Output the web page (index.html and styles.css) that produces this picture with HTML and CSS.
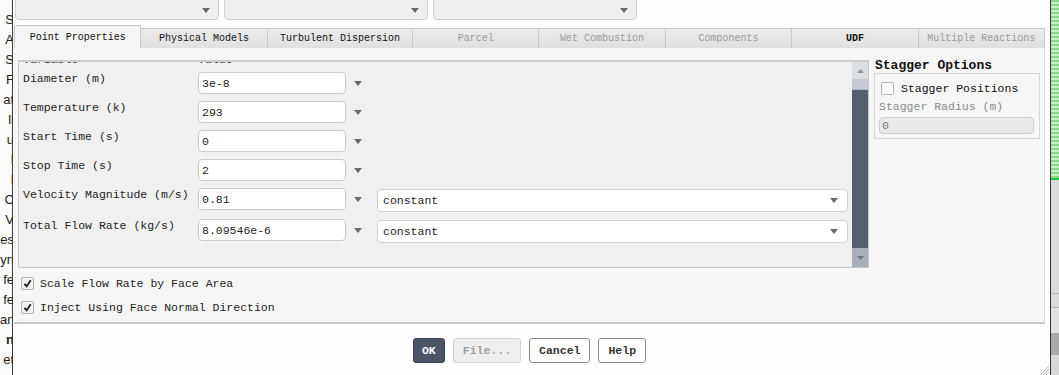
FILE: index.html
```html
<!DOCTYPE html>
<html lang="en">
<head>
  <meta charset="UTF-8">
  <title>Set Injection Properties</title>
  <meta name="viewport" content="width=device-width, initial-scale=1.0">
  <link rel="stylesheet" href="styles.css">
</head>
<body>
  <div class="screen">

    <!-- tree of the main window, mostly hidden behind the dialog -->
    <div class="behind-left">
      <div>S</div><div>A</div><div>S</div><div>F</div><div>at</div><div>ll</div>
      <div>u</div><div>I</div><div>I</div><div>C</div><div>V</div><div>es</div>
      <div>yn</div><div>fe</div><div>fe</div><div>an</div><div class="bold">n</div><div>et</div>
    </div>

    <div class="dialog">
      <div class="combos">
        <div class="combo top"><span></span><svg class="arrow" viewBox="0 0 8 5"><path d="M0 0H8L4 5Z"/></svg></div>
        <div class="combo top"><span></span><svg class="arrow" viewBox="0 0 8 5"><path d="M0 0H8L4 5Z"/></svg></div>
        <div class="combo top"><span></span><svg class="arrow" viewBox="0 0 8 5"><path d="M0 0H8L4 5Z"/></svg></div>
      </div>

      <div class="tabs">
        <div class="tab active">Point Properties</div>
        <div class="tab">Physical Models</div>
        <div class="tab wide">Turbulent Dispersion</div>
        <div class="tab disabled">Parcel</div>
        <div class="tab disabled">Wet Combustion</div>
        <div class="tab disabled">Components</div>
        <div class="tab strong">UDF</div>
        <div class="tab disabled">Multiple Reactions</div>
      </div>

      <div class="panel">
        <div class="main">
          <div class="scroll">
            <div class="rows">
              <div class="head"><span class="label">Variable</span><span>Value</span></div>

              <div class="row">
                <span class="label">Diameter (m)</span>
                <div class="input">3e-8</div>
                <div class="drop"><svg class="arrow" viewBox="0 0 8 5"><path d="M0 0H8L4 5Z"/></svg></div>
              </div>
              <div class="row">
                <span class="label">Temperature (k)</span>
                <div class="input">293</div>
                <div class="drop"><svg class="arrow" viewBox="0 0 8 5"><path d="M0 0H8L4 5Z"/></svg></div>
              </div>
              <div class="row">
                <span class="label">Start Time (s)</span>
                <div class="input">0</div>
                <div class="drop"><svg class="arrow" viewBox="0 0 8 5"><path d="M0 0H8L4 5Z"/></svg></div>
              </div>
              <div class="row">
                <span class="label">Stop Time (s)</span>
                <div class="input">2</div>
                <div class="drop"><svg class="arrow" viewBox="0 0 8 5"><path d="M0 0H8L4 5Z"/></svg></div>
              </div>
              <div class="row">
                <span class="label">Velocity Magnitude (m/s)</span>
                <div class="input">0.81</div>
                <div class="drop"><svg class="arrow" viewBox="0 0 8 5"><path d="M0 0H8L4 5Z"/></svg></div>
                <div class="combo profile"><span>constant</span><svg class="arrow" viewBox="0 0 8 5"><path d="M0 0H8L4 5Z"/></svg></div>
              </div>
              <div class="row">
                <span class="label">Total Flow Rate (kg/s)</span>
                <div class="input">8.09546e-6</div>
                <div class="drop"><svg class="arrow" viewBox="0 0 8 5"><path d="M0 0H8L4 5Z"/></svg></div>
                <div class="combo profile"><span>constant</span><svg class="arrow" viewBox="0 0 8 5"><path d="M0 0H8L4 5Z"/></svg></div>
              </div>
            </div>

            <div class="scrollbar">
              <div class="sb-up"><svg viewBox="0 0 7 4"><path d="M0 4H7L3.5 0Z"/></svg></div>
              <div class="sb-track"></div>
              <div class="sb-thumb"></div>
              <div class="sb-down"><svg viewBox="0 0 7 4"><path d="M0 0H7L3.5 4Z"/></svg></div>
            </div>
          </div>

          <div class="checks">
            <div class="check">
              <span class="box on"><svg viewBox="0 0 12 12"><path d="M2.5 6.5L5 9L9.5 2.5"/></svg></span>
              Scale Flow Rate by Face Area
            </div>
            <div class="check">
              <span class="box on"><svg viewBox="0 0 12 12"><path d="M2.5 6.5L5 9L9.5 2.5"/></svg></span>
              Inject Using Face Normal Direction
            </div>
          </div>
        </div>

        <div class="side">
          <div class="side-title">Stagger Options</div>
          <div class="group">
            <div class="check dark"><span class="box white"></span>Stagger Positions</div>
            <div class="muted">Stagger Radius (m)</div>
            <div class="input disabled">0</div>
          </div>
        </div>
      </div>

      <div class="buttons">
        <button class="btn default">OK</button>
        <button class="btn off">File...</button>
        <button class="btn">Cancel</button>
        <button class="btn">Help</button>
      </div>

      <svg class="grip" viewBox="0 0 10 10"><path d="M10 1L1 10M10 4L4 10M10 7L7 10"/></svg>
    </div>

    <div class="behind-right">
      <div class="stripes"></div>
      <div class="grey"></div>
    </div>
  </div>
</body>
</html>
```

FILE: styles.css
```css
:root {
  --line: #c8c8c8;
  --panel: #f6f6f6;
  --field: #fff;
  --text: #1e1e1e;
  --muted: #8c8c8c;
  --arrow: #6b6b6b;
  --mono: "Liberation Mono", "DejaVu Sans Mono", monospace;
}

* {
  margin: 0;
  padding: 0;
  box-sizing: border-box;
}

body {
  background: #fff;
  overflow: hidden;
}

.screen {
  display: flex;
  width: 1059px;
  height: 375px;
  overflow: hidden;
}

/* window behind the dialog */
.behind-left {
  width: 13px;
  flex: none;
  padding-top: 10px;
  background: #fbfbfb;
  border-right: 1px solid #3a3a3a;
  overflow: hidden;
  font-family: "Liberation Sans", Arial, sans-serif;
  font-size: 13px;
  color: #222;
}

.behind-left div {
  height: 20px;
  line-height: 20px;
  text-align: right;
  margin-right: -2px;
}

.behind-left .bold {
  font-weight: bold;
}

.behind-right {
  width: 10px;
  flex: none;
  border-left: 1px solid #333;
  display: flex;
  flex-direction: column;
}

.stripes {
  height: 180px;
  background: repeating-linear-gradient(#86d986 0 2px, #c9efc9 2px 4px);
  border-bottom: 2px solid #27c93a;
}

.grey {
  flex: 1;
  background: linear-gradient(#dadada 0 113px, #b5b5b5 113px 114px, #dadada 114px 127px, #b5b5b5 127px 128px, #e2e2e2 128px 153px, #a9a9a9 153px 175px, #d8d8d8 175px);
}

/* dialog */
.dialog {
  position: relative;
  flex: 1;
  padding: 0 5px 0 1px;
  background: #fefefe;
  font-family: var(--mono);
  font-size: 11.5px;
  color: var(--text);
  display: flex;
  flex-direction: column;
}

.combos {
  height: 26px;
  display: flex;
  gap: 5px;
  padding-left: 1px;
}

.combo {
  display: flex;
  align-items: center;
  justify-content: space-between;
  border: 1px solid #cfcfcf;
  border-radius: 4px;
  padding: 0 8px 0 4px;
}

.combo.top {
  width: 204px;
  height: 26px;
  margin-top: -6px;
  background: #efefef;
  padding-top: 6px;
}

.arrow {
  width: 8px;
  height: 5px;
  fill: var(--arrow);
  flex: none;
}

/* tabs */
.tabs {
  display: flex;
  align-items: flex-end;
  height: 22px;
  font-size: 10px;
}

.tab {
  flex: 1 1 0;
  height: 20px;
  line-height: 19px;
  text-align: center;
  white-space: nowrap;
  color: #111;
  background: linear-gradient(#ebebeb, #e0e0e0);
  border: 1px solid var(--line);
  border-bottom: none;
  border-left: none;
}

.tab:first-child {
  border-left: 1px solid var(--line);
}

.tab.wide {
  flex-grow: 1.15;
}

.tab.active {
  height: 23px;
  line-height: 24px;
  background: var(--panel);
  border-radius: 2px 2px 0 0;
}

.tab.disabled {
  color: #9a9a9a;
}

.tab.strong {
  font-weight: bold;
}

/* tab page */
.panel {
  display: flex;
  gap: 5px;
  height: 276px;
  padding: 12px 4px 4px;
  background: var(--panel);
  border-right: 1px solid #dcdcdc;
  border-bottom: 2px solid var(--line);
}

.main {
  width: 851px;
  display: flex;
  flex-direction: column;
}

.scroll {
  display: flex;
  height: 208px;
  background: #f0f0f0;
  border: 1px solid var(--line);
  border-top: 2px solid #cdcdcd;
  overflow: hidden;
}

.rows {
  flex: 1;
  padding-left: 4px;
  display: flex;
  flex-direction: column;
  gap: 7px;
}

/* column captions, scrolled half out of view */
.head {
  display: flex;
  height: 14px;
  line-height: 14px;
  margin-top: -9px;
  margin-bottom: -2px;
  color: #444;
}

.row {
  display: flex;
  align-items: flex-start;
}

.label {
  width: 175px;
  flex: none;
  line-height: 14px;
  white-space: nowrap;
}

.input {
  width: 148px;
  height: 22px;
  flex: none;
  line-height: 21px;
  padding: 0 3px;
  background: var(--field);
  border: 1px solid #cbcbcb;
  border-radius: 4px;
}

.drop {
  width: 31px;
  height: 22px;
  flex: none;
  display: flex;
  align-items: center;
  padding-left: 8px;
}

.combo.profile {
  flex: 1;
  height: 23px;
  margin: 1px 4px 0 0;
  background: #fff;
  padding: 0 9px 0 5px;
}

.scrollbar {
  width: 16px;
  flex: none;
  display: flex;
  flex-direction: column;
}

.scrollbar svg {
  width: 7px;
  height: 4px;
}

.sb-up {
  height: 17px;
  background: #dcdee2;
  display: flex;
  align-items: center;
  justify-content: center;
  fill: #8e939c;
}

.sb-track {
  height: 11px;
  background: #c6cbd3;
  border-bottom: 1px solid #b0b5bd;
}

.sb-thumb {
  flex: 1;
  background: #565d6c;
}

.sb-down {
  height: 19px;
  background: #a9afba;
  display: flex;
  align-items: center;
  justify-content: center;
  fill: #707785;
}

.checks {
  margin-top: 5px;
  display: flex;
  flex-direction: column;
  gap: 4px;
}

.check {
  display: flex;
  align-items: center;
  gap: 6px;
  height: 20px;
  padding-left: 3px;
  white-space: nowrap;
}

.box {
  width: 13px;
  height: 13px;
  flex: none;
  border: 1px solid #b4b4b4;
  border-radius: 2px;
  background: #f2f2f2;
  display: flex;
  align-items: center;
  justify-content: center;
}

.box svg {
  width: 11px;
  height: 11px;
  fill: none;
  stroke: #222;
  stroke-width: 2;
}

.box.white {
  background: #fff;
}

/* stagger options */
.side {
  width: 166px;
  display: flex;
  flex-direction: column;
}

.side-title {
  font-size: 13px;
  font-weight: bold;
  line-height: 14px;
  margin-top: -1px;
  padding-left: 1px;
  color: #111;
}

.group {
  height: 66px;
  border: 1px solid #d6d6d6;
  padding: 7px 5px 4px 4px;
  display: flex;
  flex-direction: column;
}

.group .check {
  height: 14px;
  padding-left: 2px;
  gap: 7px;
  color: #111;
}

.muted {
  color: var(--muted);
  line-height: 14px;
  margin-top: 5px;
}

.input.disabled {
  width: auto;
  height: 17px;
  line-height: 16px;
  margin-top: 3px;
  padding: 0 2px;
  background: #e9e9e9;
  border-color: #cdcdcd;
  color: #777;
}

/* bottom buttons */
.buttons {
  display: flex;
  justify-content: center;
  gap: 8px;
  padding-top: 14px;
}

.btn {
  height: 25px;
  padding: 0 9px;
  font-family: var(--mono);
  font-size: 11.5px;
  font-weight: bold;
  color: #333;
  background: #fff;
  border: 1px solid #8a8a8a;
  border-radius: 3px;
}

.btn.default {
  color: #fff;
  background: #4c5465;
  border-color: #3c4352;
  padding: 0 8px;
}

.btn.off {
  color: #9c9c9c;
  background: #eeeeee;
  border-color: #d2d2d2;
}

.grip {
  position: absolute;
  right: 1px;
  bottom: 0;
  width: 10px;
  height: 10px;
  fill: none;
  stroke: #b8b8b8;
  stroke-width: 1;
}
```
